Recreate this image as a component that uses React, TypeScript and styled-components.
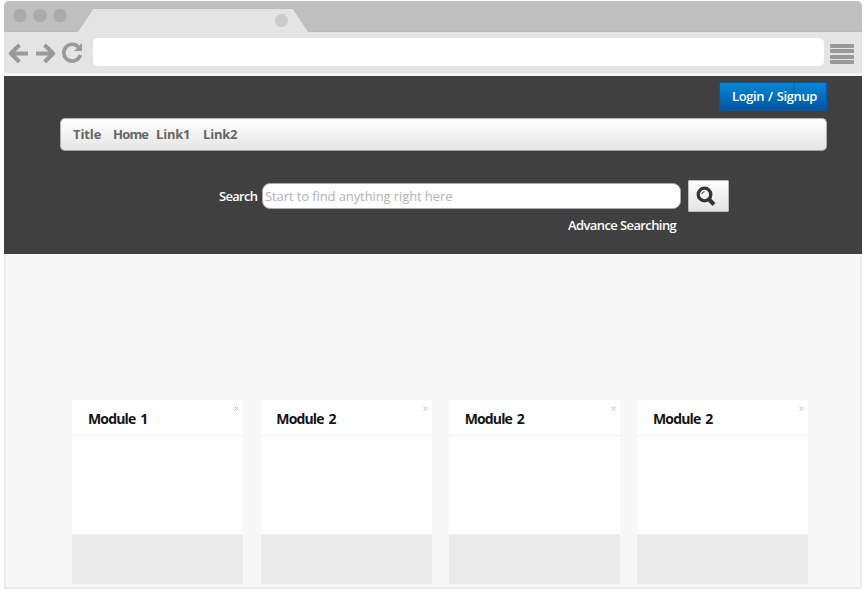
import React from 'react';
import styled, { createGlobalStyle } from 'styled-components';

const Global = createGlobalStyle`
  * { box-sizing: border-box; }
  body { margin: 0; background: #fff; font-family: "Trebuchet MS", "Open Sans", "Noto Sans", sans-serif; font-size: 13px; }
  button, input { font: inherit; margin: 0; }
`;

const Browser = styled.div`
  width: 858px;
  height: 588px;
  margin: 1px 0 0 4px;
  display: flex;
  flex-direction: column;
  border-radius: 5px 5px 0 0;
  overflow: hidden;
  background: #f7f7f7;
`;
const TabStrip = styled.div`
  height: 31px;
  flex: none;
  background: #bfbfbf;
  svg { display: block; }
`;
const Toolbar = styled.div`
  height: 44px;
  flex: none;
  display: flex;
  align-items: flex-start;
  background: #e4e4e4;
  border-bottom: 3px solid #f4f6f5;
`;
const NavIcons = styled.svg`
  width: 89px;
  height: 41px;
  flex: none;
`;
const Address = styled.div`
  width: 731px;
  height: 28px;
  margin-top: 6px;
  border-radius: 5px;
  background: #fff;
`;
const MenuIcon = styled.div`
  width: 24px;
  margin: 12px 0 0 6px;
  display: grid;
  gap: 1.33px;
  span { height: 4px; border-radius: 1px; background: #999; }
`;
const Header = styled.header`
  height: 178px;
  flex: none;
  display: flex;
  flex-direction: column;
  padding: 6px 35px 0 56px;
  background: #404040;
`;
const Login = styled.button`
  align-self: flex-end;
  width: 108px;
  height: 29px;
  padding: 0 0 2px 3px;
  border: 1px solid #0759a6;
  border-radius: 2px;
  color: #fff;
  font-weight: 600;
  white-space: nowrap;
  background: linear-gradient(90deg, transparent 73px, #0060b066 73px, #0060b066 75px, transparent 75px), linear-gradient(#0788d4, #0055a3);
`;
const NavBar = styled.nav`
  height: 33px;
  margin-top: 7px;
  display: flex;
  align-items: center;
  padding: 0 0 2px 12px;
  border: 1px solid #b3b3b3;
  border-bottom-color: #a2a2a2;
  border-radius: 5px;
  color: #666;
  font-weight: 700;
  background: linear-gradient(#fff, #e5e5e5);
`;
const Fit = styled.span<{ $w?: number; $track?: number; $word?: number }>`
  display: inline-block;
  flex: none;
  width: ${p => (p.$w ? `${p.$w}px` : 'auto')};
  letter-spacing: ${p => p.$track ?? 0}px;
  word-spacing: ${p => p.$word ?? 0}px;
  white-space: nowrap;
`;
const SearchRow = styled.form`
  display: flex;
  align-items: center;
  height: 33px;
  margin: 28px 0 0 159px;
  color: #fff;
  font-weight: 600;
`;
const Input = styled.input`
  width: 419px;
  height: 26px;
  padding: 0 2px;
  border: 1px solid #aaa;
  border-radius: 8px;
  outline: none;
  background: #fff;
  letter-spacing: -0.1px;
  font-weight: 500;
  &::placeholder { color: #b3b3b3; opacity: 1; }
`;
const SearchButton = styled.button`
  width: 41px;
  height: 32px;
  margin-left: 7px;
  padding: 0 0 0 7px;
  border: 1px solid #bbb;
  border-radius: 1px;
  background: linear-gradient(#fdfdfd, #e4e4e4);
  svg { display: block; }
`;
const Advanced = styled.div`
  margin: 4px 0 0 508px;
  line-height: 18px;
  color: #fff;
  font-weight: 600;
`;
const Content = styled.main`
  flex: 1;
  padding: 146px 0 0 66.4px;
  border: 2px solid #ebebeb;
  border-top: 0;
`;
const Modules = styled.div`
  display: grid;
  grid-template-columns: 171px 171px 171px 171px;
  column-gap: 17.33px;
`;
const Card = styled.section`
  height: 184px;
  display: flex;
  flex-direction: column;
  background: #fff;
`;
const CardHead = styled.div`
  height: 36px;
  display: flex;
  justify-content: space-between;
  padding: 0 4px 0 15.6px;
  border-bottom: 1px solid #f0f0f0;
  h2 { margin: 0; font-size: 14px; line-height: 37px; font-weight: 700; color: #151515; }
  svg { margin-top: 6px; }
`;
const CardFoot = styled.div`
  height: 50px;
  margin-top: auto;
  background: #eaeaea;
  border-top: 1px solid #f0f0f0;
`;

const modules = ['Module 1', 'Module 2', 'Module 2', 'Module 2'];

export default function App() {
  return (
    <>
      <Global />
      <Browser>
        <TabStrip>
          <svg width="858" height="31">
            <path d="M0 30.5H74L89 8H289L304 30.5H858" fill="#e4e4e4" stroke="#b8b8b8" strokeWidth="0.8" />
            <path d="M74 31L89.5 8H288.5L304 31Z" fill="#e4e4e4" />
            <g fill="#ababab"><circle cx="16" cy="14.5" r="6.8" /><circle cx="36" cy="14.5" r="6.8" /><circle cx="56" cy="14.5" r="6.8" /></g>
            <circle cx="277.5" cy="19.5" r="6.6" fill="#cbcbcb" />
          </svg>
        </TabStrip>
        <Toolbar>
          <NavIcons viewBox="0 0 89 41" fill="none" stroke="#999" strokeWidth="4" strokeLinejoin="round">
            <path d="M24 21.5H7M15.5 13L6.8 21.5L15.5 30M32 21.5H49M40.5 13L49.2 21.5L40.5 30" />
            <path d="M74.9 15.6A8.4 8.4 0 1 0 76.3 23" strokeWidth="3.6" />
            <path d="M78 11V19H70Z" fill="#999" stroke="none" />
          </NavIcons>
          <Address />
          <MenuIcon><span /><span /><span /><span /></MenuIcon>
        </Toolbar>
        <Header>
          <Login type="button"><Fit $track={-0.4} $word={1}>Login / Signup</Fit></Login>
          <NavBar>
            <Fit $w={40} $track={-0.1}>Title</Fit>
            <Fit $w={43} $track={-0.8}>Home</Fit>
            <Fit $w={47} $track={-0.2}>Link1</Fit>
            <Fit $track={-0.2}>Link2</Fit>
          </NavBar>
          <SearchRow onSubmit={e => e.preventDefault()}>
            <Fit $w={43} $track={-0.7}>Search</Fit>
            <Input placeholder="Start to find anything right here" />
            <SearchButton type="submit" aria-label="Search">
              <svg width="20" height="22" viewBox="0 0 20 22" fill="none" stroke="#333">
                <circle cx="8.5" cy="9.5" r="6.3" strokeWidth="3.3" />
                <path d="M13 14.5L18 19.5" strokeWidth="4" />
                <path d="M5.8 9.1Q6.2 6.9 8.6 6.7" strokeWidth="1" />
              </svg>
            </SearchButton>
          </SearchRow>
          <Advanced><Fit $track={-0.6}>Advance Searching</Fit></Advanced>
        </Header>
        <Content>
          <Modules>
            {modules.map((name, i) => (
              <Card key={i}>
                <CardHead>
                  <h2><Fit $track={-0.85} $word={2}>{name}</Fit></h2>
                  <svg width="5" height="5" viewBox="0 0 5 5" stroke="#bbb"><path d="M.5 .5L4.5 4.5M4.5 .5L.5 4.5" /></svg>
                </CardHead>
                <CardFoot />
              </Card>
            ))}
          </Modules>
        </Content>
      </Browser>
    </>
  );
}
